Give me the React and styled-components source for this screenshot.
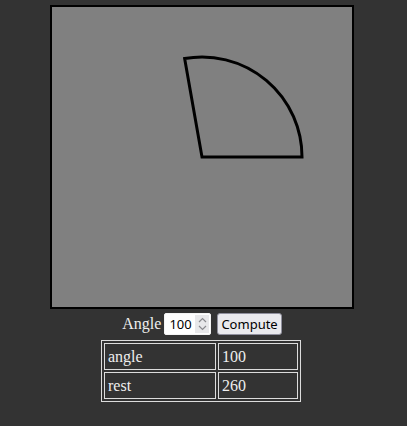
import React, { useState } from "react";
import styled, { createGlobalStyle } from "styled-components";

// fond sombre, police serif comme la page d'origine
const GlobalStyle = createGlobalStyle`
  body {
    margin: 0;
    background: #333333;
    color: #eeeeee;
    font-family: "Liberation Serif", "Times New Roman", serif;
    font-size: 16px;
  }
  input[type="number"]::-webkit-inner-spin-button,
  input[type="number"]::-webkit-outer-spin-button {
    -webkit-appearance: none;
    margin: 0;
  }
`;

const Page = styled.div`
  display: flex;
  flex-direction: column;
  align-items: center;
  padding: 5px 3px 0 0;
`;

const Board = styled.div`
  width: 300px;
  height: 300px;
  border: 2px solid #000;
  background: #808080;
  line-height: 0;
`;

const Controls = styled.div`
  display: flex;
  align-items: center;
  margin-top: 4px;
  height: 22px;
`;

const Label = styled.span`
  margin-right: 3px;
`;

// champ numérique avec son propre bouton de défilement
const InputBox = styled.div`
  display: flex;
  align-items: center;
  width: 47px;
  height: 22px;
  box-sizing: border-box;
  border: 1px solid #f4f4f4;
  border-radius: 2px;
  background: #fff;
  padding: 1px 1px 1px 0;
`;

const NumberInput = styled.input`
  width: 26px;
  flex: none;
  border: 0;
  outline: none;
  padding: 0 0 0 4px;
  background: transparent;
  color: #000;
  font-family: "Noto Sans", "Liberation Sans", sans-serif;
  font-size: 13px;
`;

const Spin = styled.div`
  flex: 1;
  align-self: stretch;
  background: #e8e8ea;
  display: flex;
  align-items: center;
  justify-content: center;
  line-height: 0;
`;

const Button = styled.button`
  height: 22px;
  box-sizing: border-box;
  padding: 0 3px;
  margin-left: 6px;
  border: 1px solid #8f8f9d;
  border-radius: 3px;
  background: #e9e9ed;
  color: #000;
  font-family: "Noto Sans", "Liberation Sans", sans-serif;
  font-size: 13px;
`;

const Results = styled.table`
  width: 200px;
  margin-top: 5px;
  border: 1px solid #dddddd;
  border-spacing: 2px;
  margin-left: -2px;
`;

const Cell = styled.td`
  border: 1px solid #dddddd;
  padding: 3px;
  line-height: 19px;
  width: ${(p) => p.$w || "auto"};
`;

function Sector({ angle }) {
  const cx = 150;
  const cy = 150;
  const r = 100;
  const a = (angle * Math.PI) / 180;
  const ex = cx + r * Math.cos(a);
  const ey = cy - r * Math.sin(a);
  const large = angle > 180 ? 1 : 0;
  return (
    <svg width="300" height="300" viewBox="0 0 300 300">
      <path
        d={`M ${cx} ${cy} L ${cx + r} ${cy} A ${r} ${r} 0 ${large} 0 ${ex} ${ey} Z`}
        fill="none"
        stroke="#000"
        strokeWidth="3"
        strokeLinejoin="miter"
      />
    </svg>
  );
}

function Chevrons() {
  return (
    <svg width="9" height="14" viewBox="0 0 9 14">
      <path
        d="M1 5 L4.5 1.5 L8 5 M1 9 L4.5 12.5 L8 9"
        fill="none"
        stroke="#8a8a8e"
        strokeWidth="1.2"
      />
    </svg>
  );
}

export default function App() {
  const [input, setInput] = useState(100);
  const [angle, setAngle] = useState(100);

  return (
    <Page>
      <GlobalStyle />
      <Board>
        <Sector angle={angle} />
      </Board>
      <Controls>
        <Label>Angle</Label>
        <InputBox>
          <NumberInput
            type="number"
            value={input}
            onChange={(e) => setInput(e.target.value)}
          />
          <Spin>
            <Chevrons />
          </Spin>
        </InputBox>
        <Button onClick={() => setAngle(Number(input) || 0)}>Compute</Button>
      </Controls>
      <Results>
        <tbody>
          <tr>
            <Cell $w="104px">angle</Cell>
            <Cell>{angle}</Cell>
          </tr>
          <tr>
            <Cell $w="104px">rest</Cell>
            <Cell>{360 - angle}</Cell>
          </tr>
        </tbody>
      </Results>
    </Page>
  );
}
